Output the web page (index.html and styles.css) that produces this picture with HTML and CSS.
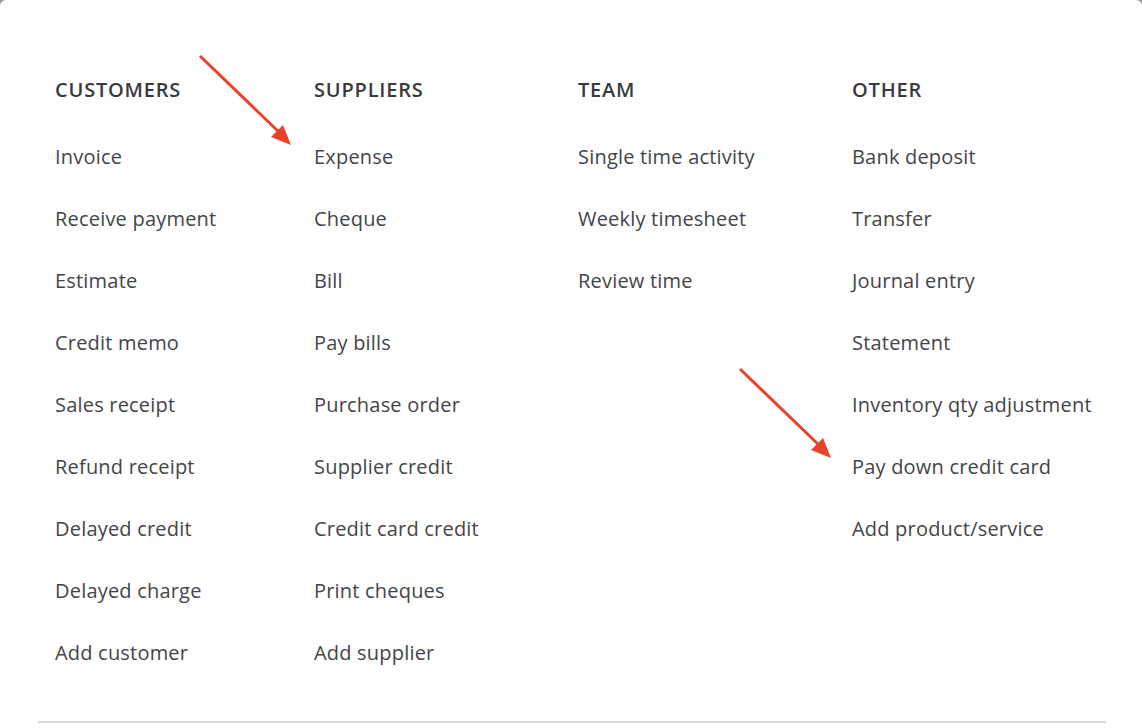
FILE: index.html
```html
<!DOCTYPE html>
<html lang="en">
<head>
    <meta charset="UTF-8">
    <meta name="viewport" content="width=device-width, initial-scale=1.0">
    <title>Create new</title>
    <link rel="stylesheet" href="styles.css">
</head>
<body>
    <div class="panel">
        <div class="menu-grid">
            <div class="menu-col">
                <h3>Customers</h3>
                <ul>
                    <li>Invoice</li>
                    <li>Receive payment</li>
                    <li>Estimate</li>
                    <li>Credit memo</li>
                    <li>Sales receipt</li>
                    <li>Refund receipt</li>
                    <li>Delayed credit</li>
                    <li>Delayed charge</li>
                    <li>Add customer</li>
                </ul>
            </div>
            <div class="menu-col">
                <h3>Suppliers</h3>
                <ul>
                    <li>Expense</li>
                    <li>Cheque</li>
                    <li>Bill</li>
                    <li>Pay bills</li>
                    <li>Purchase order</li>
                    <li>Supplier credit</li>
                    <li>Credit card credit</li>
                    <li>Print cheques</li>
                    <li>Add supplier</li>
                </ul>
            </div>
            <div class="menu-col">
                <h3>Team</h3>
                <ul>
                    <li>Single time activity</li>
                    <li>Weekly timesheet</li>
                    <li>Review time</li>
                </ul>
            </div>
            <div class="menu-col">
                <h3>Other</h3>
                <ul>
                    <li>Bank deposit</li>
                    <li>Transfer</li>
                    <li>Journal entry</li>
                    <li>Statement</li>
                    <li>Inventory qty adjustment</li>
                    <li>Pay down credit card</li>
                    <li>Add product/service</li>
                </ul>
            </div>
        </div>
        <div class="divider"></div>

        <!-- annotation arrows -->
        <svg class="arrow arrow-expense" width="100" height="96" viewBox="0 0 100 96">
            <line x1="3" y1="3" x2="84" y2="81" stroke="#e8432a" stroke-width="3"/>
            <polygon points="94,92 74,84 86,72" fill="#e8432a"/>
        </svg>
        <svg class="arrow arrow-paydown" width="100" height="96" viewBox="0 0 100 96">
            <line x1="3" y1="3" x2="84" y2="81" stroke="#e8432a" stroke-width="3"/>
            <polygon points="94,92 74,84 86,72" fill="#e8432a"/>
        </svg>
    </div>
</body>
</html>
```

FILE: styles.css
```css
body {
    margin: 0;
    padding: 0;
    background-color: #9a9a9a;
    font-family: "Open Sans", Lato, Arial, sans-serif;
}

.panel {
    position: relative;
    background-color: #ffffff;
    border-radius: 6px 6px 0 0;
    height: 728px;
    box-sizing: border-box;
    padding: 78px 0 0 55px;
    overflow: hidden;
}

.menu-grid {
    display: grid;
    grid-template-columns: 259px 264px 274px auto;
}

    .menu-col h3 {
        margin: 0 0 24px 0;
        font-size: 20px;
        letter-spacing: 0.8px;
        line-height: 24px;
        font-weight: 600;
        text-transform: uppercase;
        color: #393a3d;
    }

    .menu-col ul {
        list-style: none;
        margin: 0;
        padding: 0;
    }

        .menu-col li {
            font-size: 20px;
            letter-spacing: 0.2px;
            line-height: 62px;
            color: #444548;
            white-space: nowrap;
        }

.divider {
    margin: 37px 0 0 -17px;
    width: 1068px;
    height: 2px;
    background-color: #d6d7db;
}

.arrow {
    position: absolute;
}

.arrow-expense {
    left: 197px;
    top: 53px;
}

.arrow-paydown {
    left: 737px;
    top: 366px;
}
```
